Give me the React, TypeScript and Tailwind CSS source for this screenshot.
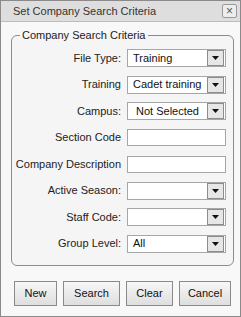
import React from 'react';

const font = { fontFamily: '"Liberation Sans", Arial, sans-serif' };

function Arrow() {
  return (
    <span className="flex items-center justify-center w-[17px] h-[16px] border border-[#8c8c8c] bg-[#e6e6e6] mr-[1px]">
      <svg width="7" height="4" viewBox="0 0 7 4">
        <path d="M0 0H7L3.5 4Z" fill="#111" />
      </svg>
    </span>
  );
}

function Select({ value, indent }: { value?: string; indent?: boolean }) {
  return (
    <div className="flex items-center w-[99px] h-[18px] border border-[#a6a6a6] bg-white">
      <span
        className={`flex-1 ${indent ? 'pl-[8px]' : 'pl-[5px]'} text-[11px] leading-none text-[#111] whitespace-nowrap overflow-hidden`}
      >
        {value}
      </span>
      <Arrow />
    </div>
  );
}

function TextBox() {
  return <div className="w-[99px] h-[17px] border border-[#a6a6a6] bg-white" />;
}

function Row({ label, children }: { label: string; children: React.ReactNode }) {
  return (
    <div className="flex items-center h-[18px]">
      <span className="w-[109px] text-right text-[11px] text-[#222] whitespace-nowrap">{label}</span>
      <div className="ml-[6px]">{children}</div>
    </div>
  );
}

function Btn({ label, w }: { label: string; w: string }) {
  return (
    <button
      className={`${w} h-[25px] border border-[#8a8a8a] bg-gradient-to-b from-[#f7f7f7] to-[#dedede] text-[11px] text-[#111]`}
    >
      {label}
    </button>
  );
}

export default function App() {
  return (
    <div style={font} className="w-[241px] h-[317px] border border-[#8a8a8a] bg-[#f8f8f8] flex flex-col">
      {/* title bar */}
      <div className="flex items-center justify-between h-[21px] bg-[#dedede] border-b border-[#bcbcbc] pl-[12px] pr-[3px]">
        <span className="text-[11px] text-[#333]">Set Company Search Criteria</span>
        <span className="flex items-center justify-center w-[15px] h-[14px] border border-[#9a9a9a] rounded-[2px] bg-[#ededed] text-[12px] leading-none text-[#555]">
          ×
        </span>
      </div>

      <fieldset className="mt-[6px] ml-[10px] w-[223px] border border-[#8c8c8c] rounded-[6px] bg-[#f5f5f5] p-0">
        <legend className="ml-[8px] px-[2px] text-[11px] leading-[14px] text-[#222]">Company Search Criteria</legend>
        <div className="flex flex-col gap-[8.5px] pt-[7px] pb-[12px]">
          <Row label="File Type:">
            <Select value="Training" />
          </Row>
          <Row label="Training">
            <Select value="Cadet training" />
          </Row>
          <Row label="Campus:">
            <Select value="Not Selected" indent />
          </Row>
          <Row label="Section Code">
            <TextBox />
          </Row>
          <Row label="Company Description">
            <TextBox />
          </Row>
          <Row label="Active Season:">
            <Select />
          </Row>
          <Row label="Staff Code:">
            <Select />
          </Row>
          <Row label="Group Level:">
            <Select value="All" />
          </Row>
        </div>
      </fieldset>

      <div className="flex mt-[15px] ml-[13px] gap-[6px]">
        <Btn label="New" w="w-[43px]" />
        <Btn label="Search" w="w-[57px]" />
        <Btn label="Clear" w="w-[47px]" />
        <Btn label="Cancel" w="w-[52px]" />
      </div>
    </div>
  );
}
